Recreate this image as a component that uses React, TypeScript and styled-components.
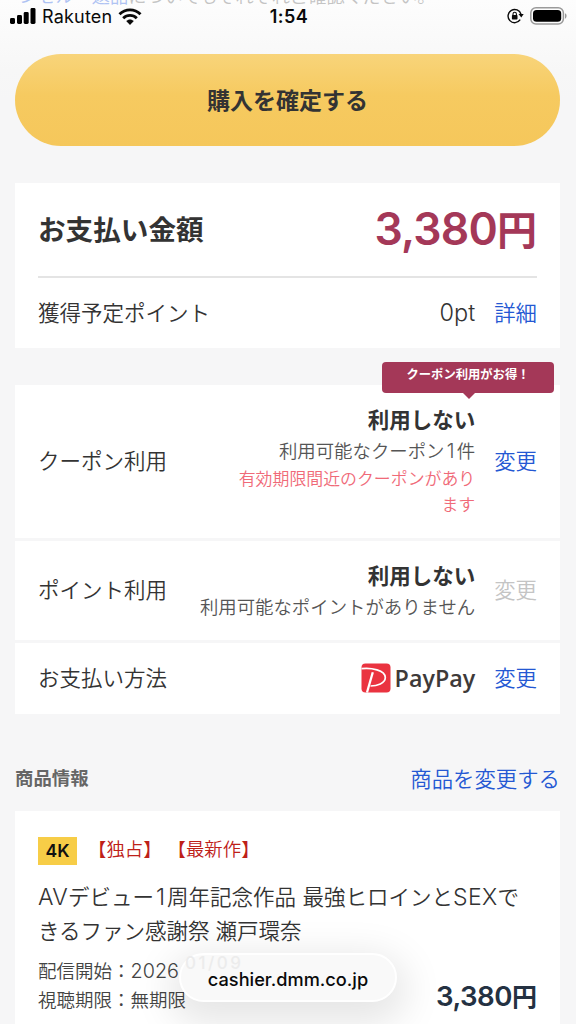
import React from "react";
import styled, { createGlobalStyle } from "styled-components";

const GlobalStyle = createGlobalStyle`
  *, *::before, *::after { box-sizing: border-box; }
  body {
    margin: 0;
    background: #f6f6f7;
    color: #333;
    font-family: Inter, "Noto Sans CJK JP", sans-serif;
    overflow: hidden;
  }
`;

const Screen = styled.div`
  position: relative;
  width: 576px;
  height: 1024px;
  overflow: hidden;
  background: linear-gradient(#fdfdfd 0, #f7f7f7 70px, #f6f6f7 100px);
`;

const ScrolledNote = styled.p`
  position: absolute;
  top: -17px;
  left: 19px;
  margin: 0;
  font-size: 18.2px;
  line-height: 26px;
  font-weight: 350;
  white-space: nowrap;
  color: #c4c4c4;
`;

const NoteLink = styled.span`
  color: #afc3f3;
`;

const StatusBar = styled.header`
  position: relative;
  display: grid;
  grid-template-columns: 1fr auto 1fr;
  align-items: center;
  height: 32px;
  padding: 0 8px 0 10px;
  color: #0a0a0a;
`;

const StatusGroup = styled.div<{ $end?: boolean }>`
  display: flex;
  align-items: center;
  justify-content: ${(p) => (p.$end ? "flex-end" : "flex-start")};
  gap: 6px;
`;

const Carrier = styled.span`
  font-size: 18px;
  letter-spacing: 0.2px;
`;

const Clock = styled.span`
  font-size: 18px;
  font-weight: 600;
  letter-spacing: 0.5px;
`;

const Main = styled.main`
  position: relative;
  padding: 22px 16px 0 15px;
`;

const ConfirmButton = styled.button`
  display: block;
  width: 100%;
  height: 92px;
  border: 0;
  border-radius: 46px;
  background: linear-gradient(#f8d47a, #f6ca60 45%, #f5c75b);
  color: #333;
  font: 700 23px/92px Inter, "Noto Sans CJK JP", sans-serif;
  padding: 1px 0 0;
`;

const Card = styled.section<{ $top: number }>`
  position: relative;
  margin-top: ${(p) => p.$top}px;
  padding: 0 23px;
  background: #fff;
`;

const ProductCard = styled(Card)`
  height: 260px;
`;

const TotalRow = styled.div`
  display: flex;
  justify-content: space-between;
  align-items: center;
  height: 95px;
  border-bottom: 2px solid #e4e4e4;
`;

const TotalLabel = styled.h2`
  margin: 0;
  padding-bottom: 4px;
  font-size: 27.6px;
  font-weight: 700;
`;

const Price = styled.span<{ $size: number; $color: string; $spacing?: number }>`
  font-size: ${(p) => p.$size}px;
  line-height: 1;
  font-weight: 600;
  letter-spacing: ${(p) => p.$spacing ?? 0}px;
  color: ${(p) => p.$color};
`;

const Yen = styled.span<{ $size: number }>`
  font-size: ${(p) => p.$size}px;
  font-weight: 700;
  letter-spacing: 0;
`;

const Row = styled.div<{ $height: number; $divided?: boolean }>`
  display: flex;
  align-items: center;
  height: ${(p) => p.$height}px;
  margin: 0 -23px;
  padding: 0 23px;
  border-top: ${(p) => (p.$divided ? "3px solid #f6f6f7" : "0")};
`;

const RowLabel = styled.span`
  flex: none;
  padding-bottom: 4px;
  font-size: 21.5px;
  font-weight: 350;
`;

const RowValue = styled.div<{ $lift?: number }>`
  flex: 1;
  display: flex;
  flex-direction: column;
  align-items: flex-end;
  padding-bottom: ${(p) => p.$lift ?? 0}px;
  text-align: right;
  font-weight: 350;
`;

const Points = styled.span`
  font-size: 23.5px;
  line-height: 30px;
  font-weight: 300;
`;

const Choice = styled.strong`
  font-size: 21.5px;
  line-height: 34px;
  font-weight: 700;
`;

const Hint = styled.span`
  font-size: 18.4px;
  line-height: 29px;
  color: #555;
`;

const Latin = styled.span<{ $spacing?: number; $pad?: number }>`
  font-size: 1.07em;
  line-height: 1;
  font-weight: 300;
  letter-spacing: ${(p) => p.$spacing ?? 0}px;
  padding: 0 ${(p) => p.$pad ?? 0}px;
`;

const Warning = styled.span`
  width: 240px;
  font-size: 16.9px;
  line-height: 26px;
  color: #f06a78;
`;

const Action = styled.a<{ $disabled?: boolean }>`
  flex: none;
  margin-left: 19px;
  padding-bottom: 4px;
  font-size: 21.4px;
  font-weight: 350;
  color: ${(p) => (p.$disabled ? "#c4c4c4" : "#2458d3")};
`;

const Bubble = styled.div`
  position: absolute;
  top: -23px;
  right: 6px;
  width: 172px;
  height: 31px;
  border-radius: 4px;
  background: #a43858;
  color: #fff;
  text-align: center;
  font-size: 12.3px;
  line-height: 25px;
  font-weight: 700;
  &::after {
    content: "";
    position: absolute;
    top: 31px;
    left: 81px;
    border: 6px solid transparent;
    border-top-color: #a43858;
    border-bottom: 0;
  }
`;

const Brand = styled.div`
  display: flex;
  align-items: center;
  gap: 4px;
`;

const BrandName = styled.span`
  font-family: "Open Sans", "Noto Sans", sans-serif;
  font-size: 23.3px;
  line-height: 30px;
  font-weight: 600;
  color: #3e3a39;
`;

const SectionHead = styled.div`
  display: flex;
  align-items: center;
  justify-content: space-between;
  height: 97px;
  padding-top: 33px;
`;

const SectionTitle = styled.h3`
  margin: 0;
  padding-bottom: 4px;
  font-size: 18.4px;
  font-weight: 700;
  color: #666;
`;

const Tags = styled.div`
  display: flex;
  align-items: center;
  padding-top: 24px;
  height: 54px;
`;

const Quality = styled.span`
  width: 39px;
  height: 28px;
  margin: 1px 11px 0 0;
  background: #f7cd47;
  color: #111;
  text-align: center;
  font-size: 17.5px;
  line-height: 27px;
  font-weight: 600;
`;

const Tag = styled.span`
  margin: 0 6px 4px 0;
  font-family: "Noto Sans CJK JP", sans-serif;
  font-size: 18.4px;
  font-weight: 350;
  color: #be2018;
`;

const ProductName = styled.p`
  margin: 16px 0 0;
  font-size: 21.5px;
  line-height: 33.7px;
  font-weight: 350;
  white-space: nowrap;
`;

const Details = styled.div`
  display: flex;
  justify-content: space-between;
  margin-top: 9px;
  font-size: 18.5px;
  line-height: 29px;
  font-weight: 350;
  color: #444;
`;

const DetailPrice = styled.div`
  padding-top: 26px;
`;

const AddressPill = styled.div`
  position: absolute;
  left: 179px;
  top: 953px;
  width: 218px;
  height: 49px;
  border-radius: 25px;
  border: 2px solid #fff;
  background: #f9f9f9;
  box-shadow: 0 12px 38px 10px rgba(0, 0, 0, 0.1);
  color: #0a0a0a;
  text-align: center;
  font-size: 18.2px;
  line-height: 48px;
  font-weight: 500;
`;

const Refraction = styled.span`
  position: absolute;
  left: 4px;
  top: 0;
  font-size: 17px;
  line-height: 16px;
  letter-spacing: 2.5px;
  font-weight: 500;
  color: #ececec;
`;

const SignalIcon = () => (
  <svg width="26" height="16" viewBox="0 0 26 16">
    <rect x="0" y="10" width="5" height="6" rx="1.4" />
    <rect x="7" y="7" width="5" height="9" rx="1.4" />
    <rect x="13.7" y="4" width="5" height="12" rx="1.4" />
    <rect x="20.5" y="0" width="5" height="16" rx="1.4" />
  </svg>
);

const WifiIcon = () => (
  <svg width="24" height="17" viewBox="0 0 24 17" fill="none" stroke="#0a0a0a" strokeWidth="2.9">
    <path d="M1.5 6.2C7.4.4 16.6.4 22.5 6.2" />
    <path d="M5.2 10.2c3.9-3.8 9.7-3.8 13.6 0" />
    <path d="M8.2 13.1c2.1-2.1 5.5-2.1 7.6 0L12 17z" fill="#0a0a0a" stroke="none" />
  </svg>
);

const RotationLockIcon = () => (
  <svg width="17" height="16" viewBox="0 0 17 16" fill="none" stroke="#0a0a0a" strokeWidth="1.4">
    <path d="M14 6.2A6.6 6.6 0 1 0 13.2 11.7" />
    <path d="M11.5 6h5.2l-2.4 3.6z" fill="#0a0a0a" stroke="none" />
    <rect x="4.9" y="7" width="5.6" height="4.4" rx=".7" fill="#0a0a0a" stroke="none" />
    <path d="M6 7.3V6a1.7 1.7 0 0 1 3.4 0v1.3" strokeWidth="1.1" />
  </svg>
);

const BatteryIcon = () => (
  <svg width="38" height="18" viewBox="0 0 38 18">
    <rect x=".8" y=".8" width="32.6" height="16.2" rx="5.2" fill="none" stroke="#9a9a9a" strokeWidth="1.5" />
    <rect x="3" y="3" width="28.2" height="11.8" rx="3.6" fill="#000" />
    <path d="M35 6.3c2.1.8 2.1 4.6 0 5.4z" fill="#9a9a9a" />
  </svg>
);

const PayPayMark = () => (
  <svg width="30" height="30" viewBox="0 0 30 30">
    <rect x=".5" y=".5" width="29" height="29" rx="4" fill="#ea3340" />
    <path d="M.5 5.7C10 4.6 24.3 7 24.3 14.6c0 5.9-8.4 8.3-14.8 8.4" fill="none" stroke="#fff" strokeWidth="1.7" />
    <path d="M11.8 9.3 6 29.5" fill="none" stroke="#fff" strokeWidth="2.3" />
  </svg>
);

export default function App() {
  return (
    <>
      <GlobalStyle />
      <Screen>
        <ScrolledNote>
          <NoteLink>ンセル・返品</NoteLink>についてもそれぞれご確認ください。
        </ScrolledNote>
        <StatusBar>
          <StatusGroup>
            <SignalIcon />
            <Carrier>Rakuten</Carrier>
            <WifiIcon />
          </StatusGroup>
          <Clock>1:54</Clock>
          <StatusGroup $end>
            <RotationLockIcon />
            <BatteryIcon />
          </StatusGroup>
        </StatusBar>
        <Main>
          <ConfirmButton>購入を確定する</ConfirmButton>

          <Card $top={37}>
            <TotalRow>
              <TotalLabel>お支払い金額</TotalLabel>
              <Price $size={44.5} $color="#a43858" $spacing={-0.8}>
                3,380<Yen $size={40}>円</Yen>
              </Price>
            </TotalRow>
            <Row $height={70}>
              <RowLabel>獲得予定ポイント</RowLabel>
              <RowValue>
                <Points>0pt</Points>
              </RowValue>
              <Action>詳細</Action>
            </Row>
          </Card>

          <Card $top={37}>
            <Bubble>クーポン利用がお得！</Bubble>
            <Row $height={153}>
              <RowLabel>クーポン利用</RowLabel>
              <RowValue $lift={2}>
                <Choice>利用しない</Choice>
                <Hint>
                  利用可能なクーポン<Latin $pad={2.3}>1</Latin>件
                </Hint>
                <Warning>有効期限間近のクーポンがあります</Warning>
              </RowValue>
              <Action>変更</Action>
            </Row>
            <Row $height={102} $divided>
              <RowLabel>ポイント利用</RowLabel>
              <RowValue $lift={1}>
                <Choice>利用しない</Choice>
                <Hint>利用可能なポイントがありません</Hint>
              </RowValue>
              <Action $disabled>変更</Action>
            </Row>
            <Row $height={74} $divided>
              <RowLabel>お支払い方法</RowLabel>
              <RowValue $lift={2}>
                <Brand>
                  <PayPayMark />
                  <BrandName>PayPay</BrandName>
                </Brand>
              </RowValue>
              <Action>変更</Action>
            </Row>
          </Card>

          <SectionHead>
            <SectionTitle>商品情報</SectionTitle>
            <Action>商品を変更する</Action>
          </SectionHead>

          <ProductCard $top={0}>
            <Tags>
              <Quality>4K</Quality>
              <Tag>【独占】</Tag>
              <Tag>【最新作】</Tag>
            </Tags>
            <ProductName>
              <Latin $spacing={0.3}>AV</Latin>デビュー<Latin $pad={2}>1</Latin>周年記念作品
              <Latin> </Latin>最強ヒロインと<Latin $spacing={0.3}>SEX</Latin>で
              <br />
              きるファン感謝祭 瀬戸環奈
            </ProductName>
            <Details>
              <div>
                配信開始：<Latin>2026</Latin>
                <br />
                視聴期限：無期限
              </div>
              <DetailPrice>
                <Price $size={27.6} $color="#243142" $spacing={-0.5}>
                  3,380<Yen $size={25}>円</Yen>
                </Price>
              </DetailPrice>
            </Details>
          </ProductCard>
        </Main>
        <AddressPill>
          <Refraction>01/09</Refraction>
          cashier.dmm.co.jp
        </AddressPill>
      </Screen>
    </>
  );
}
